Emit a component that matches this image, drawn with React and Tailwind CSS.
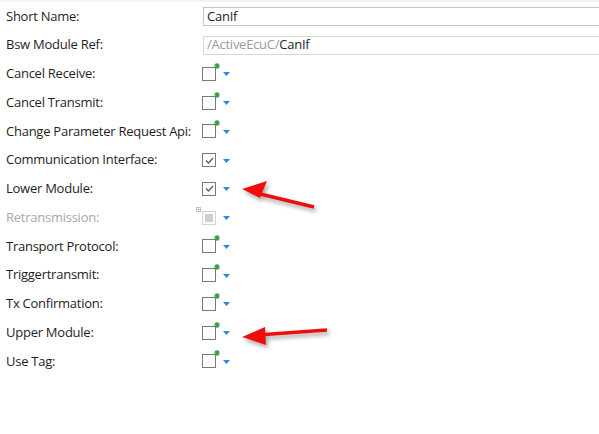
import React from 'react';

const rows = [
  { label: 'Cancel Receive:', state: 'new' },
  { label: 'Cancel Transmit:', state: 'new' },
  { label: 'Change Parameter Request Api:', state: 'new' },
  { label: 'Communication Interface:', state: 'checked' },
  { label: 'Lower Module:', state: 'checked' },
  { label: 'Retransmission:', state: 'disabled' },
  { label: 'Transport Protocol:', state: 'new' },
  { label: 'Triggertransmit:', state: 'new' },
  { label: 'Tx Confirmation:', state: 'new' },
  { label: 'Upper Module:', state: 'new' },
  { label: 'Use Tag:', state: 'new' },
];

function Caret() {
  return (
    <svg width="7" height="4" viewBox="0 0 7 4" className="ml-[7px] mt-[1px]">
      <path d="M0 0H7L3.5 4Z" fill="#2a8ae0" />
    </svg>
  );
}

function CheckCell({ state }) {
  if (state === 'disabled') {
    return (
      <div className="flex items-center">
        <div className="relative w-[14px] h-[14px] border border-[#d4d4d4] bg-white flex items-center justify-center">
          <div className="w-[8px] h-[8px] bg-[#cfcfcf]" />
          <svg width="5" height="5" viewBox="0 0 5 5" className="absolute -left-[7px] -top-[5px]">
            <rect x="0.5" y="0.5" width="4" height="4" fill="none" stroke="#5b8fd8" strokeWidth="1" strokeDasharray="1 1" />
            <rect x="2" y="2" width="1" height="1" fill="#5b8fd8" />
          </svg>
        </div>
        <Caret />
      </div>
    );
  }
  return (
    <div className="flex items-center">
      <div className="relative w-[14px] h-[14px] border border-[#7a7a7a] bg-white flex items-center justify-center">
        {state === 'checked' && (
          <svg width="9" height="7" viewBox="0 0 9 7">
            <path d="M1 3.5L3.5 6L8 1" fill="none" stroke="#5a5a5a" strokeWidth="1.3" />
          </svg>
        )}
        {state === 'new' && (
          <svg width="6" height="6" viewBox="0 0 6 6" className="absolute -right-[5px] -top-[5px]">
            <path d="M3 0V6M0 3H6M0.9 0.9L5.1 5.1M5.1 0.9L0.9 5.1" stroke="#2e9e3e" strokeWidth="1.2" />
          </svg>
        )}
      </div>
      <Caret />
    </div>
  );
}

export default function App() {
  return (
    <div className="relative w-[599px] h-[434px] bg-white overflow-hidden font-['Segoe_UI','Open_Sans',sans-serif] text-[13px] tracking-[-0.25px] text-[#1e1e1e]">
      <div className="h-[2px] bg-[#f4f4f4]" />
      <div className="flex flex-col">
        <div className="flex items-center h-[28.75px]">
          <div className="w-[203px] pl-[6px] shrink-0">Short Name:</div>
          <div className="flex-1 h-[19px] border border-r-0 border-[#c6c6c6] pl-[3px] flex items-center">CanIf</div>
        </div>
        <div className="flex items-center h-[28.75px]">
          <div className="w-[203px] pl-[6px] shrink-0">Bsw Module Ref:</div>
          <div className="flex-1 h-[19px] border border-r-0 border-[#d8d8d8] pl-[3px] flex items-center">
            <span className="text-[#9a9a9a]">/ActiveEcuC/</span>
            <span>CanIf</span>
          </div>
        </div>
        {rows.map((r) => (
          <div key={r.label} className="flex items-center h-[28.75px]">
            <div className={`w-[202px] pl-[6px] shrink-0 ${r.state === 'disabled' ? 'text-[#a8a8a8]' : ''}`}>{r.label}</div>
            <CheckCell state={r.state} />
          </div>
        ))}
      </div>

      <svg className="absolute left-0 top-0 pointer-events-none" width="599" height="434">
        <defs>
          <filter id="sh" x="-20%" y="-50%" width="140%" height="200%">
            <feDropShadow dx="2" dy="3" stdDeviation="2" floodColor="#000" floodOpacity="0.35" />
          </filter>
        </defs>
        <g filter="url(#sh)" fill="#ee1111" stroke="#ee1111">
          <line x1="314" y1="207" x2="256" y2="193" strokeWidth="3.5" />
          <path d="M242 189L267 181L260 198Z" stroke="none" />
          <line x1="327" y1="330" x2="258" y2="335" strokeWidth="3.5" />
          <path d="M242 337L265 327L266 345Z" stroke="none" />
        </g>
      </svg>
    </div>
  );
}
